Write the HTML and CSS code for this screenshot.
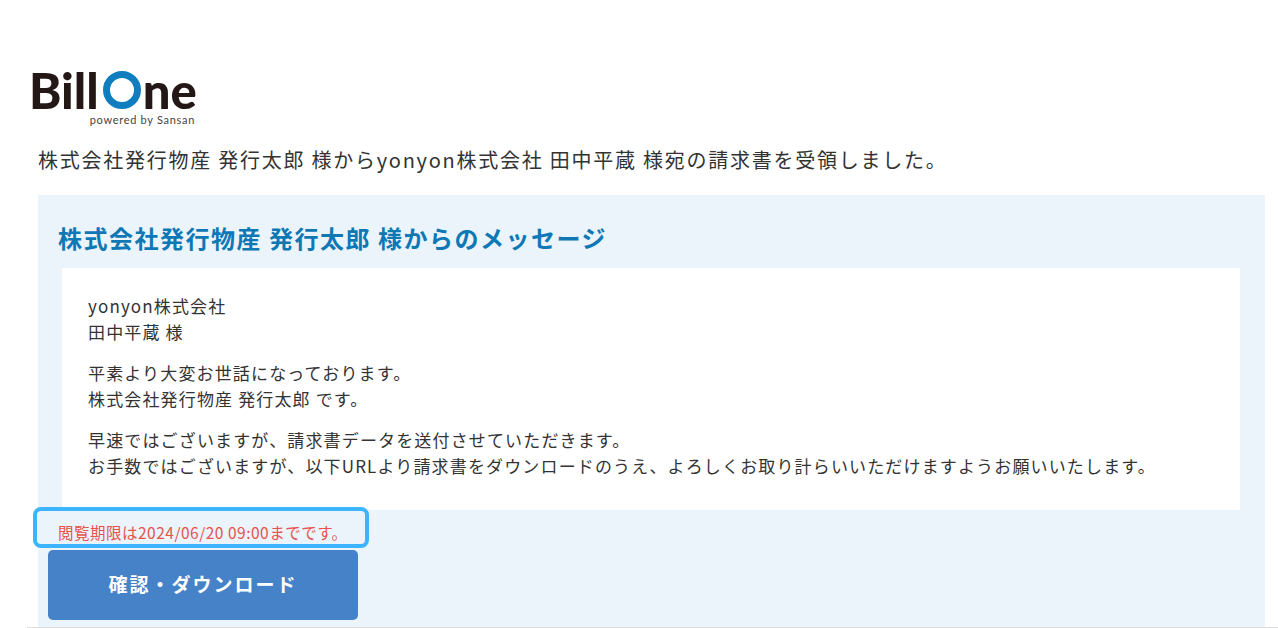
FILE: index.html
```html
<!DOCTYPE html>
<html lang="ja">
<head>
    <meta charset="UTF-8">
    <title>Bill One</title>
    <link rel="stylesheet" href="styles.css">
</head>
<body>
    <div class="page">
        <div class="logo">
            <div class="logo-main">
                <span>Bill</span>
                <span class="logo-ring"></span>
                <span>ne</span>
            </div>
            <div class="logo-sub">powered by Sansan</div>
        </div>
        <p class="intro">株式会社発行物産 発行太郎 様からyonyon株式会社 田中平蔵 様宛の請求書を受領しました。</p>
        <div class="panel">
            <h2>株式会社発行物産 発行太郎 様からのメッセージ</h2>
            <div class="message">
                <p>yonyon株式会社<br>田中平蔵 様</p>
                <p>平素より大変お世話になっております。<br>株式会社発行物産 発行太郎 です。</p>
                <p>早速ではございますが、請求書データを送付させていただきます。<br>お手数ではございますが、以下URLより請求書をダウンロードのうえ、よろしくお取り計らいいただけますようお願いいたします。</p>
            </div>
            <div class="deadline">閲覧期限は2024/06/20 09:00までです。</div>
            <button class="download">確認・ダウンロード</button>
        </div>
        <div class="highlight"></div>
    </div>
</body>
</html>
```

FILE: styles.css
```css
html, body {
    margin: 0;
    padding: 0;
}
body {
    background: #fff;
    color: #333;
    font-family: "Noto Sans CJK JP", "Noto Sans", sans-serif;
    overflow: hidden;
}
.page {
    position: relative;
    height: 628px;
    box-sizing: border-box;
    padding-top: 68px;
}
.logo {
    margin-left: 29px;
    width: 166px;
    height: 60px;
}
.logo-main {
    display: flex;
    align-items: center;
    height: 44px;
    color: #231815;
    font-family: "Lato", sans-serif;
    font-weight: 900;
    font-size: 49px;
    line-height: 44px;
}
.logo-ring {
    width: 38px;
    height: 38px;
    box-sizing: border-box;
    border: 7px solid #0f7dbe;
    border-radius: 50%;
    margin: 0 2px 0 4px;
    flex: none;
}
.logo-sub {
    text-align: right;
    color: #444;
    font-family: "Lato", sans-serif;
    font-size: 11px;
    line-height: 12px;
    letter-spacing: 0.7px;
    margin-top: 2px;
}
.intro {
    margin: 17px 0 0 38px;
    font-size: 20px;
    line-height: 30px;
    letter-spacing: 1.75px;
    color: #333;
}
.panel {
    margin: 20px 13px 0 38px;
    height: 432px;
    background: #ebf3fb;
    box-sizing: border-box;
    padding: 24px 25px 0 20px;
}
.panel h2 {
    margin: 0;
    font-size: 24px;
    line-height: 38px;
    font-weight: 700;
    letter-spacing: 1.5px;
    color: #0e78b4;
}
.message {
    margin: 11px 0 0 4px;
    height: 242px;
    box-sizing: border-box;
    padding: 25px 26px 0;
    background: #fff;
    font-size: 17px;
    line-height: 26px;
    letter-spacing: 1.15px;
    color: #333;
}
.message p {
    margin: 0 0 15px;
}
.deadline {
    margin-top: 12px;
    color: #e5534b;
    font-size: 15.5px;
    line-height: 20px;
    letter-spacing: 0.5px;
}
.download {
    display: block;
    margin: 8px 0 0 -10px;
    width: 310px;
    height: 70px;
    padding-bottom: 4px;
    border: none;
    border-radius: 5px;
    background: #4682c8;
    color: #fff;
    font-family: inherit;
    font-size: 19px;
    font-weight: 700;
    letter-spacing: 2px;
}
.page::after {
    content: "";
    position: absolute;
    left: 27px;
    right: 0;
    bottom: 0;
    height: 1px;
    background: #dcdcdc;
}
.highlight {
    position: absolute;
    left: 33px;
    top: 507px;
    width: 336px;
    height: 41px;
    box-sizing: border-box;
    border: 4px solid #3db4ff;
    border-radius: 8px;
}
```
